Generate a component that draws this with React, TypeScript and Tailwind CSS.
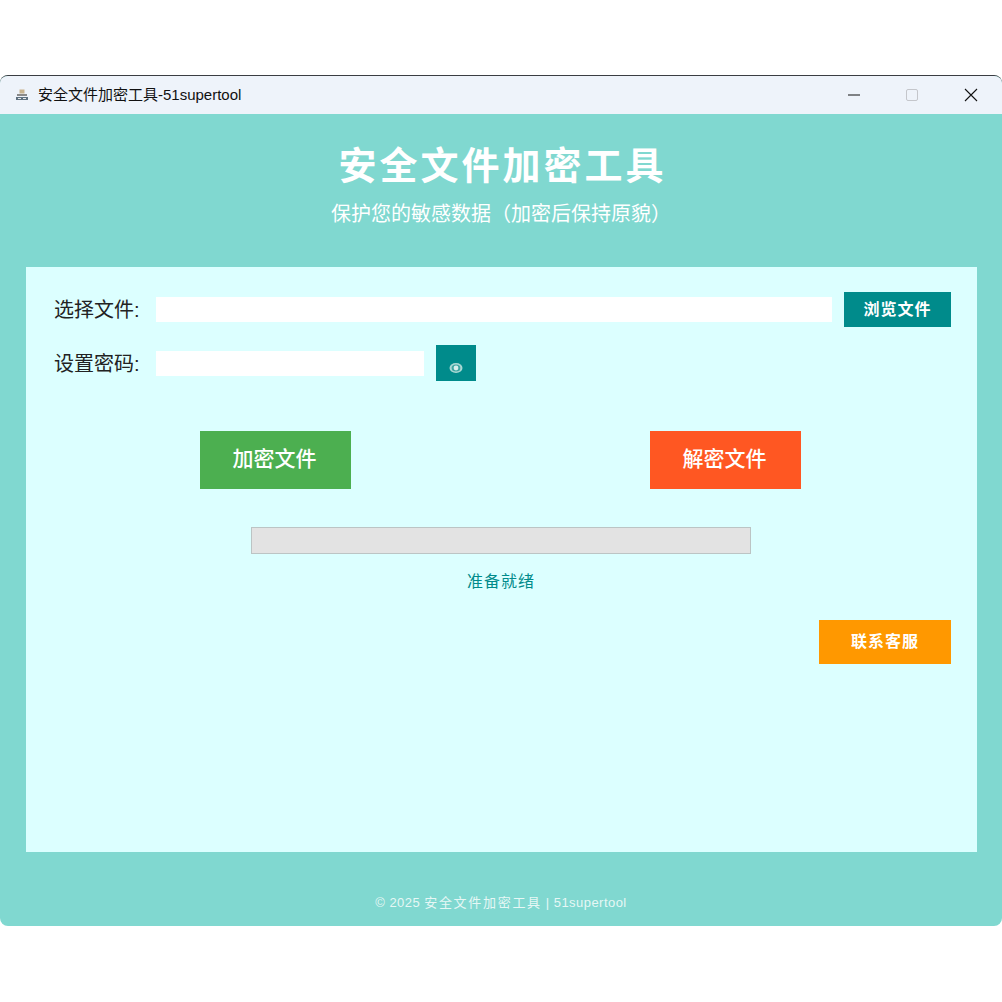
import React from 'react';

const cjk = "font-['Liberation_Sans','Noto_Sans_CJK_SC',sans-serif]";

const WindowButtons = () => (
  <div className="flex items-center">
    <div className="w-[58px] h-[38px] flex items-center justify-center pr-[2px]">
      <svg width="14" height="14" viewBox="0 0 14 14"><path d="M1 7h12" stroke="#111" strokeWidth="1" /></svg>
    </div>
    <div className="w-[58px] h-[38px] flex items-center justify-center pr-[2px]">
      <div className="w-[12px] h-[12px] border border-[#c4c6cb] rounded-[2px]" />
    </div>
    <div className="w-[58px] h-[38px] flex items-center justify-center mr-[2px]">
      <svg width="14" height="14" viewBox="0 0 14 14"><path d="M1 1l12 12M13 1L1 13" stroke="#111" strokeWidth="1.1" /></svg>
    </div>
  </div>
);

const AppIcon = () => (
  <svg width="14" height="14" viewBox="0 0 14 14" className="mr-[9px]">
    <rect x="4.5" y="1.5" width="5" height="4" fill="#c9b48f" />
    <rect x="2" y="6" width="10" height="2" fill="#8a8a8a" />
    <rect x="1" y="9" width="12" height="3" fill="#5f7180" />
    <rect x="3" y="10" width="3" height="1" fill="#e8e8e8" />
    <rect x="8" y="10" width="3" height="1" fill="#e8e8e8" />
  </svg>
);

const EyeIcon = () => (
  <svg width="14" height="12" viewBox="0 0 14 12">
    <ellipse cx="7" cy="6" rx="6.5" ry="5" fill="#a9d8d4" />
    <ellipse cx="7" cy="6" rx="4.4" ry="3.6" fill="#3ea6a2" />
    <circle cx="7" cy="6" r="2.4" fill="#d9efed" />
  </svg>
);

export default function App() {
  return (
    <div className={`${cjk} w-[1002px] h-[1002px] bg-white pt-[75px] overflow-hidden`}>
      <div className="w-[1002px] h-[851px] flex flex-col rounded-[8px] overflow-hidden border-t border-[#3a3d42] bg-[#80d8d0]">
        <div className="h-[38px] shrink-0 bg-[#eef3fa] flex items-center justify-between pl-[15px]">
          <div className="flex items-center text-[15px] text-[#111]">
            <AppIcon />
            <span>安全文件加密工具-51supertool</span>
          </div>
          <WindowButtons />
        </div>

        <div className="h-[153px] shrink-0 flex flex-col items-center pt-[26px] text-white">
          <h1 className="text-[38px] leading-[52px] font-bold tracking-[3px] pl-[3px]">安全文件加密工具</h1>
          <p className="text-[20px] leading-[28px] mt-[8px]">保护您的敏感数据（加密后保持原貌）</p>
        </div>

        <div className="mx-[26px] h-[585px] w-[951px] shrink-0 bg-[#dcffff] pt-[25px] pl-[28px] pr-[26px] flex flex-col">
          <div className="flex items-center h-[35px]">
            <label className="w-[102px] text-[20px] text-[#222]">选择文件:</label>
            <div className="w-[676px] h-[25px] bg-white" />
            <button className="ml-[12px] w-[107px] h-[35px] bg-[#008b8b] text-white text-[16px] font-bold tracking-[1px]">浏览文件</button>
          </div>

          <div className="flex items-center h-[36px] mt-[18px]">
            <label className="w-[102px] text-[20px] text-[#222] pt-[1px]">设置密码:</label>
            <div className="w-[268px] h-[25px] bg-white" />
            <button className="ml-[12px] w-[40px] h-[36px] bg-[#008b8b] flex items-center justify-center pt-[9px]">
              <EyeIcon />
            </button>
          </div>

          <div className="flex justify-between mt-[50px] pl-[146px] pr-[150px]">
            <button className="w-[151px] h-[58px] bg-[#4caf50] text-white text-[21px] font-medium pb-[2px] pr-[2px]">加密文件</button>
            <button className="w-[151px] h-[58px] bg-[#ff5722] text-white text-[21px] font-medium pb-[2px] pr-[2px]">解密文件</button>
          </div>

          <div className="mt-[38px] ml-[197px] w-[500px] h-[27px] bg-[#e3e3e3] border border-[#bcc4c4]" />

          <p className="mt-[16px] ml-[197px] w-[500px] text-center text-[16px] leading-[24px] tracking-[1px] text-[#008b8b]">准备就绪</p>

          <div className="flex justify-end mt-[26px]">
            <button className="w-[132px] h-[44px] bg-[#ff9800] text-white text-[16px] font-bold tracking-[1px]">联系客服</button>
          </div>
        </div>

        <div className="flex-1 flex items-center justify-center pt-[27px] text-[13px] tracking-[0.45px] text-[#e6f7f5]">
          <span className="whitespace-pre">© 2025 <span className="tracking-[1.7px]">安全文件加密工具</span> | 51supertool</span>
        </div>
      </div>
    </div>
  );
}
